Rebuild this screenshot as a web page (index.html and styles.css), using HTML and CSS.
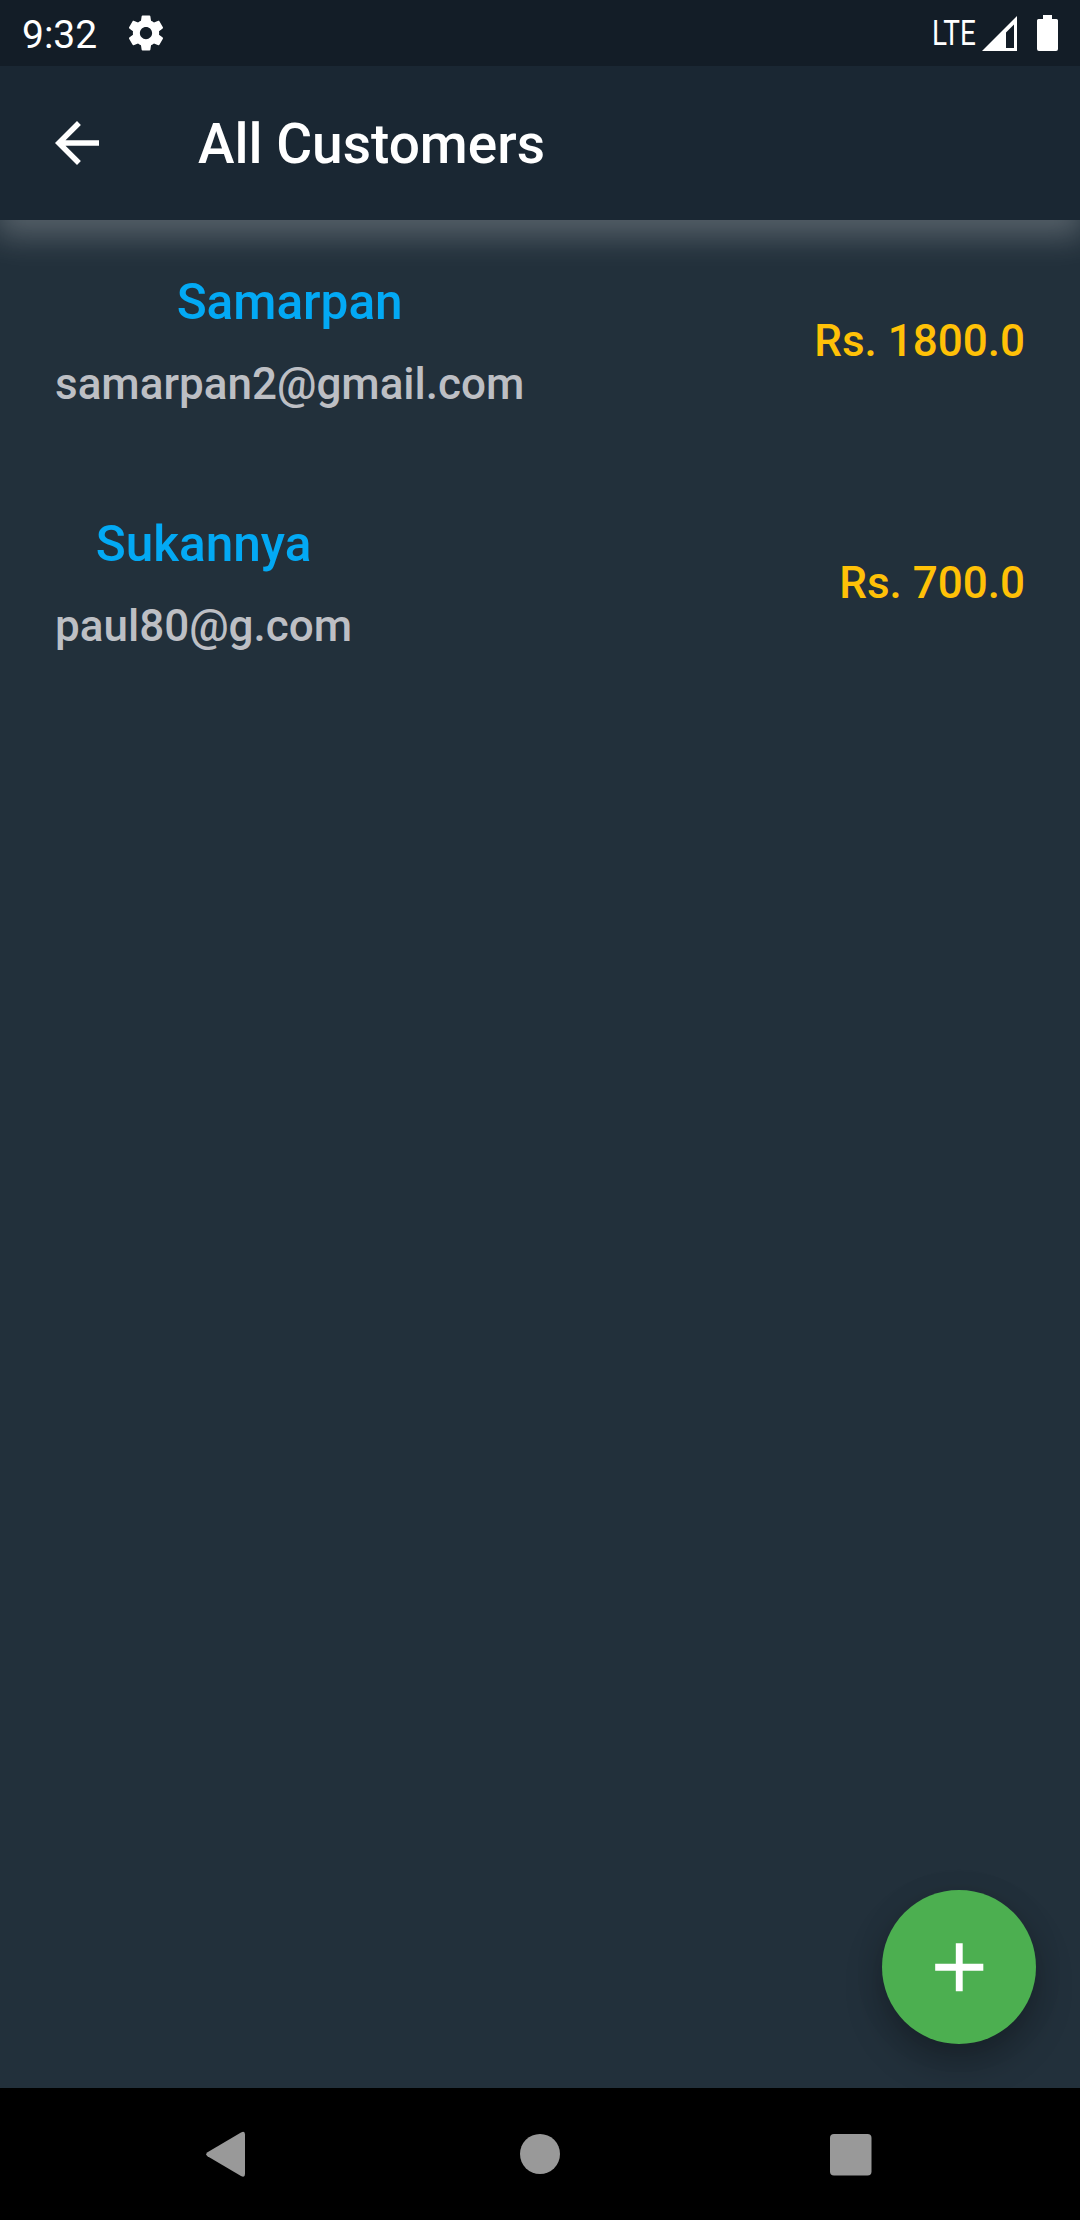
FILE: index.html
```html
<!DOCTYPE html>
<html lang="en">
<head>
<meta charset="utf-8">
<title>All Customers</title>
<link rel="stylesheet" href="styles.css">
</head>
<body>
<div class="screen">
  <div class="status-bar">
    <span class="clock">9:32</span>
    <svg class="gear" viewBox="0 0 24 24"><path d="M19.43 12.98c.04-.32.07-.64.07-.98s-.03-.66-.07-.98l2.11-1.65c.19-.15.24-.42.12-.64l-2-3.46c-.12-.22-.39-.3-.61-.22l-2.49 1c-.52-.4-1.08-.73-1.69-.98l-.38-2.65C14.46 2.18 14.25 2 14 2h-4c-.25 0-.46.18-.49.42l-.38 2.65c-.61.25-1.17.59-1.69.98l-2.49-1c-.23-.09-.49 0-.61.22l-2 3.46c-.13.22-.07.49.12.64l2.11 1.65c-.04.32-.07.65-.07.98s.03.66.07.98l-2.11 1.65c-.19.15-.24.42-.12.64l2 3.46c.12.22.39.3.61.22l2.49-1c.52.4 1.08.73 1.69.98l.38 2.65c.03.24.24.42.49.42h4c.25 0 .46-.18.49-.42l.38-2.65c.61-.25 1.17-.59 1.69-.98l2.49 1c.23.09.49 0 .61-.22l2-3.46c.12-.22.07-.49-.12-.64l-2.11-1.65zM12 15.5c-1.93 0-3.5-1.57-3.5-3.5s1.57-3.5 3.5-3.5 3.5 1.57 3.5 3.5-1.57 3.5-3.5 3.5z"/></svg>
    <div class="indicators">
      <span class="network">LTE</span>
      <svg class="signal" viewBox="0 0 35 35"><path fill-rule="evenodd" d="M35 0V35H0ZM32 8.500L24 16.500V32H32Z"/></svg>
      <svg class="battery" viewBox="0 0 21 36"><path d="M6 0H15V4H19.500Q21 4 21 5.500V34Q21 36 19 36H2Q0 36 0 34V5.500Q0 4 1.500 4H6Z"/></svg>
    </div>
  </div>
  <header class="app-bar">
    <svg class="back" viewBox="0 0 24 24"><path d="M20 11H7.830l5.590-5.590L12 4l-8 8 8 8 1.410-1.410L7.830 13H20v-2z"/></svg>
    <h1 class="title">All Customers</h1>
  </header>
  <main class="customers">
    <div class="customer">
      <div class="identity">
        <span class="name">Samarpan</span>
        <span class="email">samarpan2@gmail.com</span>
      </div>
      <span class="balance">Rs. 1800.0</span>
    </div>
    <div class="customer">
      <div class="identity">
        <span class="name">Sukannya</span>
        <span class="email">paul80@g.com</span>
      </div>
      <span class="balance">Rs. 700.0</span>
    </div>
    <button class="fab" aria-label="Add customer">
      <svg class="plus" viewBox="0 0 24 24"><path d="M19 13h-6v6h-2v-6H5v-2h6V5h2v6h6v2z"/></svg>
    </button>
  </main>
  <nav class="nav-bar">
    <svg class="nav-icon" viewBox="0 0 48 48"><path d="M35 2.500Q39 0.500 39 4.500V44Q39 48 35 46L1.500 26.300Q-1 24.300 1.500 22.200Z"/></svg>
    <svg class="nav-icon" viewBox="0 0 48 48"><circle cx="24" cy="24" r="20"/></svg>
    <svg class="nav-icon" viewBox="0 0 48 48"><rect x="4" y="4" width="41.500" height="41.500" rx="4"/></svg>
  </nav>
</div>
</body>
</html>
```
FILE: styles.css
```css
body {
  margin: 0;
  font-family: Roboto, "Liberation Sans", sans-serif;
  background: #22303b;
}

svg {
  display: block;
  fill: currentColor;
}

.screen {
  display: flex;
  flex-direction: column;
  width: 1080px;
  height: 2220px;
  overflow: hidden;
  color: #fff;
}

.status-bar {
  z-index: 2;
  display: flex;
  flex: none;
  align-items: center;
  box-sizing: border-box;
  height: 66px;
  padding: 0 22px;
  background: #131d27;
}

.clock {
  font-size: 39px;
  line-height: 46px;
  padding-top: 4px;
}

.gear {
  width: 42px;
  height: 42px;
  margin-left: 28px;
}

.indicators {
  display: flex;
  align-items: center;
  margin-left: auto;
}

.network {
  width: 50px;
  font-size: 34.5px;
  line-height: 40px;
  transform: scaleX(.81);
  transform-origin: left;
}

.signal {
  width: 35px;
  height: 35px;
}

.battery {
  width: 21px;
  height: 36px;
  margin-left: 20px;
}

.app-bar {
  z-index: 1;
  display: flex;
  flex: none;
  align-items: center;
  height: 154px;
  background: #1a2733;
  box-shadow: 0 13px 30px 4px rgba(255, 255, 255, .23);
}

.back {
  width: 66px;
  height: 66px;
  margin: 0 88px 0 44px;
}

.title {
  margin: 0;
  padding-top: 2px;
  font-size: 55px;
  font-weight: 500;
  line-height: 64px;
}

.customers {
  position: relative;
  flex: 1;
  background: #22303b;
}

.customer {
  display: flex;
  align-items: center;
  justify-content: space-between;
  height: 242px;
  padding: 0 55px;
  font-weight: 500;
}

.identity {
  display: flex;
  flex-direction: column;
  align-items: center;
  gap: 27px;
}

.name {
  color: #03a9f4;
  font-size: 49.5px;
  line-height: 58px;
}

.email {
  color: #bdbfc4;
  font-size: 44px;
  line-height: 52px;
}

.balance {
  color: #ffc107;
  font-size: 44px;
  line-height: 52px;
}

.fab {
  position: absolute;
  right: 44px;
  bottom: 44px;
  display: grid;
  place-items: center;
  width: 154px;
  height: 154px;
  padding: 0;
  border: 0;
  border-radius: 50%;
  color: #fff;
  background: #4caf50;
  box-shadow: 0 18px 36px rgba(0, 0, 0, .27), 0 4px 32px rgba(0, 0, 0, .08);
}

.plus {
  width: 82.5px;
  height: 82.5px;
}

.nav-bar {
  z-index: 1;
  display: flex;
  flex: none;
  align-items: center;
  justify-content: space-between;
  box-sizing: border-box;
  height: 132px;
  padding: 0 206px;
  color: #999;
  background: #000;
}

.nav-icon {
  width: 48px;
  height: 48px;
}
```
